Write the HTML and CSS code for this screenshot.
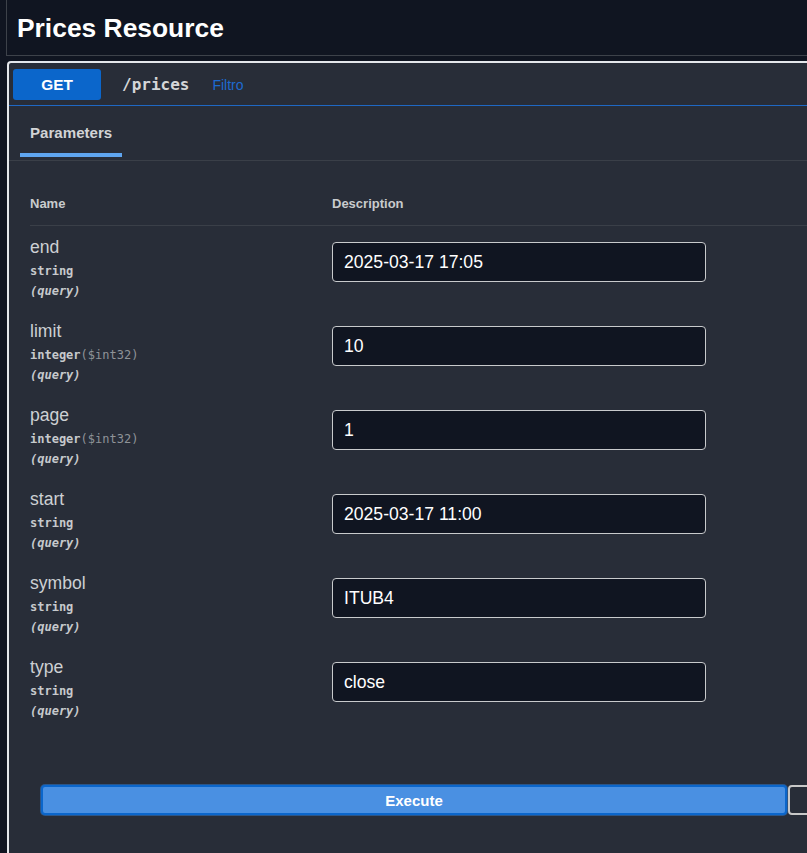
FILE: index.html
```html
<!DOCTYPE html>
<html lang="pt">
<head>
<meta charset="utf-8">
<title>Prices Resource</title>
<link rel="stylesheet" href="styles.css">
</head>
<body>
<div class="page">
  <div class="tag-header"><h3 class="tag-title">Prices Resource</h3></div>
  <div class="opblock">
    <div class="summary">
      <span class="method">GET</span>
      <span class="path">/prices</span>
      <span class="desc">Filtro</span>
    </div>
    <div class="tabs"><div class="tab">Parameters</div></div>
    <div class="params">
      <div class="thead"><div>Name</div><div>Description</div></div>
      <div class="row">
        <div class="pcell"><div class="pname">end</div><div class="ptype">string</div><div class="pin">(query)</div></div>
        <div class="dcell"><input class="pinput" type="text" value="2025-03-17 17:05"></div>
      </div>
      <div class="row">
        <div class="pcell"><div class="pname">limit</div><div class="ptype">integer<span class="fmt">($int32)</span></div><div class="pin">(query)</div></div>
        <div class="dcell"><input class="pinput" type="text" value="10"></div>
      </div>
      <div class="row">
        <div class="pcell"><div class="pname">page</div><div class="ptype">integer<span class="fmt">($int32)</span></div><div class="pin">(query)</div></div>
        <div class="dcell"><input class="pinput" type="text" value="1"></div>
      </div>
      <div class="row">
        <div class="pcell"><div class="pname">start</div><div class="ptype">string</div><div class="pin">(query)</div></div>
        <div class="dcell"><input class="pinput" type="text" value="2025-03-17 11:00"></div>
      </div>
      <div class="row">
        <div class="pcell"><div class="pname">symbol</div><div class="ptype">string</div><div class="pin">(query)</div></div>
        <div class="dcell"><input class="pinput" type="text" value="ITUB4"></div>
      </div>
      <div class="row">
        <div class="pcell"><div class="pname">type</div><div class="ptype">string</div><div class="pin">(query)</div></div>
        <div class="dcell"><input class="pinput" type="text" value="close"></div>
      </div>
    </div>
    <div class="btn-group">
      <button class="btn execute">Execute</button>
      <button class="btn clear" aria-label="Clear"></button>
    </div>
  </div>
</div>
</body>
</html>
```

FILE: styles.css
```css
html, body {
  margin: 0;
  padding: 0;
  background: #101521;
  width: 807px;
  height: 853px;
  overflow: hidden;
  font-family: "Liberation Sans", Arial, sans-serif;
}

.page {
  padding-left: 6px;
  width: 1600px;
}

.tag-header {
  border-left: 1px solid #3d424a;
  border-bottom: 1px solid #3d424a;
  padding: 12px 0 0 10px;
  height: 43px;
}

.tag-title {
  margin: 0;
  font-size: 26.4px;
  line-height: 32px;
  font-weight: bold;
  color: #ffffff;
}

.opblock {
  margin: 5px 0 0 1px;
  border: 2px solid #e4e7eb;
  border-bottom: none;
  border-radius: 4px 4px 0 0;
  background: #282d38;
  height: 790px;
}

.summary {
  display: flex;
  align-items: center;
  padding: 6px 5px 5px 4px;
  border-bottom: 1px solid #1f68c4;
}

.method {
  width: 88px;
  height: 31px;
  background: #0b66cb;
  border-radius: 3px;
  color: #ffffff;
  font-weight: bold;
  font-size: 15.4px;
  display: flex;
  align-items: center;
  justify-content: center;
}

.path {
  margin-left: 21px;
  font-family: "DejaVu Sans Mono", monospace;
  font-weight: bold;
  font-size: 16px;
  color: #d4d6d8;
}

.desc {
  margin-left: 23px;
  font-size: 14px;
  color: #1d6bd1;
}

.tabs {
  display: flex;
  padding: 17px 0 3px 11px;
  border-bottom: 1px solid #3a3f48;
}

.tab {
  padding: 0 10px 10px;
  font-size: 15.1px;
  line-height: 20px;
  font-weight: bold;
  color: #d2d4d6;
  border-bottom: 4px solid #5fa5f0;
}

.params {
  padding: 35px 0 0 21px;
}

.thead {
  display: grid;
  grid-template-columns: 302px 1fr;
  font-size: 13px;
  line-height: 16px;
  font-weight: bold;
  color: #c9cbcd;
  padding-bottom: 13px;
  border-bottom: 1px solid #3a3f48;
}

.row {
  display: grid;
  grid-template-columns: 302px 1fr;
  padding: 11px 0 9px;
}

.pname {
  font-size: 17.6px;
  line-height: 20px;
  color: #cdd0d3;
}

.ptype {
  margin-top: 4px;
  font-family: "DejaVu Sans Mono", monospace;
  font-size: 12px;
  line-height: 20px;
  font-weight: bold;
  color: #c6c9cc;
}

.fmt {
  font-weight: normal;
  color: #8f9398;
}

.pin {
  font-family: "DejaVu Sans Mono", monospace;
  font-size: 12px;
  line-height: 20px;
  font-style: italic;
  font-weight: bold;
  color: #c6c9cc;
}

.dcell {
  padding-top: 5px;
}

.pinput {
  display: block;
  width: 374px;
  height: 40px;
  box-sizing: border-box;
  margin: 0;
  padding: 0 11px;
  border: 1px solid #c8cacc;
  border-radius: 4px;
  background: #101521;
  color: #ffffff;
  font-family: "Liberation Sans", Arial, sans-serif;
  font-size: 17.6px;
  outline: none;
}

.btn-group {
  display: flex;
  padding: 55px 0 0 32px;
}

.btn {
  width: 746px;
  height: 30px;
  box-sizing: border-box;
  margin: 0;
  border-radius: 4px;
  font-family: "Liberation Sans", Arial, sans-serif;
  font-size: 15px;
  font-weight: bold;
  padding: 0;
}

.execute {
  border: 2px solid #0b66cb;
  background: #4a90e2;
  color: #ffffff;
  box-shadow: 0 0 0 1px #2b5588;
}

.clear {
  margin-left: 1px;
  border: 2px solid #c8c8c8;
  background: transparent;
}
```
